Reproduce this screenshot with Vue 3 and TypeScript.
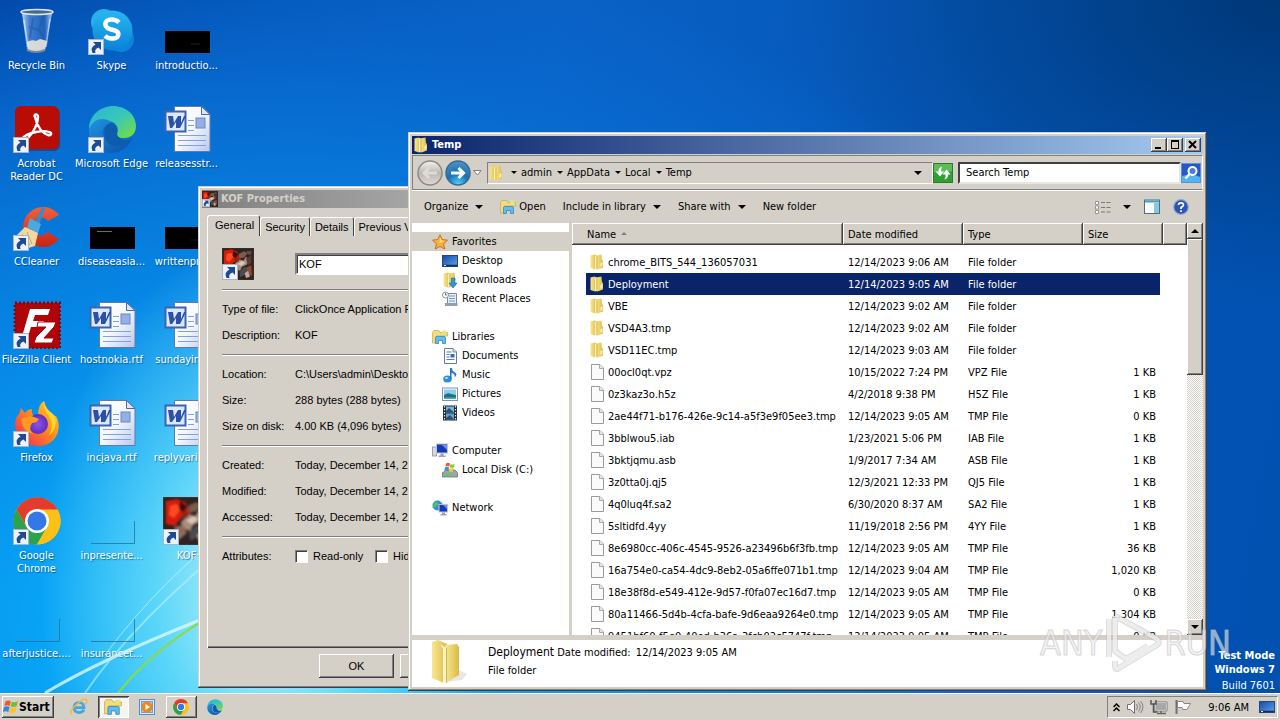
<script setup lang="ts">
interface DesktopItem {
  label: string
  icon: string
  shortcut?: boolean
}
interface FileRow {
  name: string
  date: string
  type: string
  size: string
}
interface NavEntry {
  label: string
  icon: string
  root?: boolean
}

const desktopItems: DesktopItem[] = [
  { label: 'Recycle Bin', icon: 'bin' },
  { label: 'Acrobat\nReader DC', icon: 'acrobat', shortcut: true },
  { label: 'CCleaner', icon: 'ccleaner', shortcut: true },
  { label: 'FileZilla Client', icon: 'filezilla', shortcut: true },
  { label: 'Firefox', icon: 'firefox', shortcut: true },
  { label: 'Google\nChrome', icon: 'chrome', shortcut: true },
  { label: 'afterjustice....', icon: 'blank' },
  { label: 'Skype', icon: 'skype', shortcut: true },
  { label: 'Microsoft Edge', icon: 'edge', shortcut: true },
  { label: 'diseaseasia...', icon: 'blackline' },
  { label: 'hostnokia.rtf', icon: 'word' },
  { label: 'incjava.rtf', icon: 'word' },
  { label: 'inpresente...', icon: 'blank' },
  { label: 'insurancet...', icon: 'blank' },
  { label: 'introductio...', icon: 'black' },
  { label: 'releasesstr...', icon: 'word' },
  { label: 'writtenprio...', icon: 'black' },
  { label: 'sundayincl...', icon: 'word' },
  { label: 'replyvariou...', icon: 'word' },
  { label: 'KOF', icon: 'kof', shortcut: true }
]

const navGroups: NavEntry[][] = [
  [
    { label: 'Favorites', icon: 'star', root: true },
    { label: 'Desktop', icon: 'desk' },
    { label: 'Downloads', icon: 'downloads' },
    { label: 'Recent Places', icon: 'recent' }
  ],
  [
    { label: 'Libraries', icon: 'library', root: true },
    { label: 'Documents', icon: 'document' },
    { label: 'Music', icon: 'music' },
    { label: 'Pictures', icon: 'pictures' },
    { label: 'Videos', icon: 'videos' }
  ],
  [
    { label: 'Computer', icon: 'computer', root: true },
    { label: 'Local Disk (C:)', icon: 'disk' }
  ],
  [{ label: 'Network', icon: 'network', root: true }]
]

const files: FileRow[] = [
  { name: 'chrome_BITS_544_136057031', date: '12/14/2023 9:06 AM', type: 'File folder', size: '' },
  { name: 'Deployment', date: '12/14/2023 9:05 AM', type: 'File folder', size: '' },
  { name: 'VBE', date: '12/14/2023 9:02 AM', type: 'File folder', size: '' },
  { name: 'VSD4A3.tmp', date: '12/14/2023 9:02 AM', type: 'File folder', size: '' },
  { name: 'VSD11EC.tmp', date: '12/14/2023 9:03 AM', type: 'File folder', size: '' },
  { name: '00ocl0qt.vpz', date: '10/15/2022 7:24 PM', type: 'VPZ File', size: '1 KB' },
  { name: '0z3kaz3o.h5z', date: '4/2/2018 9:38 PM', type: 'H5Z File', size: '1 KB' },
  { name: '2ae44f71-b176-426e-9c14-a5f3e9f05ee3.tmp', date: '12/14/2023 9:05 AM', type: 'TMP File', size: '0 KB' },
  { name: '3bblwou5.iab', date: '1/23/2021 5:06 PM', type: 'IAB File', size: '1 KB' },
  { name: '3bktjqmu.asb', date: '1/9/2017 7:34 AM', type: 'ASB File', size: '1 KB' },
  { name: '3z0tta0j.qj5', date: '12/3/2021 12:33 PM', type: 'QJ5 File', size: '1 KB' },
  { name: '4q0luq4f.sa2', date: '6/30/2020 8:37 AM', type: 'SA2 File', size: '1 KB' },
  { name: '5sltidfd.4yy', date: '11/19/2018 2:56 PM', type: '4YY File', size: '1 KB' },
  { name: '8e6980cc-406c-4545-9526-a23496b6f3fb.tmp', date: '12/14/2023 9:05 AM', type: 'TMP File', size: '36 KB' },
  { name: '16a754e0-ca54-4dc9-8eb2-05a6ffe071b1.tmp', date: '12/14/2023 9:04 AM', type: 'TMP File', size: '1,020 KB' },
  { name: '18e38f8d-e549-412e-9d57-f0fa07ec16d7.tmp', date: '12/14/2023 9:05 AM', type: 'TMP File', size: '0 KB' },
  { name: '80a11466-5d4b-4cfa-bafe-9d6eaa9264e0.tmp', date: '12/14/2023 9:05 AM', type: 'TMP File', size: '1,304 KB' },
  { name: '9451bf60-f5e0-40ed-b36a-3fcb02c5747f.tmp', date: '12/14/2023 9:05 AM', type: 'TMP File', size: '0 KB' }
]
const selectedName = 'Deployment'

const crumbs = ['admin', 'AppData', 'Local', 'Temp']

const propertyGroups: [string, string][][] = [
  [
    ['Type of file:', 'ClickOnce Application Reference'],
    ['Description:', 'KOF']
  ],
  [
    ['Location:', 'C:\\Users\\admin\\Desktop'],
    ['Size:', '288 bytes (288 bytes)'],
    ['Size on disk:', '4.00 KB (4,096 bytes)']
  ],
  [
    ['Created:', 'Today, December 14, 2023'],
    ['Modified:', 'Today, December 14, 2023'],
    ['Accessed:', 'Today, December 14, 2023']
  ]
]
</script>

<template>
  <div class="screen">
    <svg class="sprite" aria-hidden="true">
      <defs>
        <linearGradient id="gFolder" x1="0" x2="1"><stop offset="0" stop-color="#f8e692" /><stop offset=".55" stop-color="#ead068" /><stop offset="1" stop-color="#d8b848" /></linearGradient>
        <linearGradient id="gPage" x1="0" y1="0" x2="1" y2="1"><stop offset="0" stop-color="#fff" /><stop offset=".5" stop-color="#f4f8ff" /><stop offset="1" stop-color="#b8c8ec" /></linearGradient>
        <linearGradient id="gSkype" x1="0" y1="0" x2="0" y2="1"><stop offset="0" stop-color="#28b8f0" /><stop offset="1" stop-color="#0a82d8" /></linearGradient>
        <linearGradient id="gEdgeTop" x1="0" y1="0" x2="1" y2="1"><stop offset="0" stop-color="#2bb4d8" /><stop offset=".5" stop-color="#38c8b8" /><stop offset="1" stop-color="#7ce030" /></linearGradient>
        <linearGradient id="gEdgeLow" x1="0" y1="0" x2="1" y2="1"><stop offset="0" stop-color="#1f94e0" /><stop offset="1" stop-color="#0c4ea8" /></linearGradient>
        <linearGradient id="gFox" x1="1" y1="0" x2="0" y2="1"><stop offset="0" stop-color="#ffe226" /><stop offset=".45" stop-color="#ff8a1e" /><stop offset="1" stop-color="#f01e5a" /></linearGradient>
        <radialGradient id="gFoxIn"><stop offset="0" stop-color="#9050f0" /><stop offset="1" stop-color="#5a30b8" /></radialGradient>
        <linearGradient id="gGlass" x1="0" x2="1"><stop offset="0" stop-color="#d8e8fa" stop-opacity=".9" /><stop offset=".25" stop-color="#5a92dc" stop-opacity=".7" /><stop offset=".75" stop-color="#2f6cc4" stop-opacity=".6" /><stop offset="1" stop-color="#d0e2f6" stop-opacity=".9" /></linearGradient>
        <linearGradient id="gScreen" x1="0" y1="0" x2="1" y2="1"><stop offset="0" stop-color="#1648a8" /><stop offset="1" stop-color="#5aa4ee" /></linearGradient>
        <radialGradient id="gBlue" cx=".5" cy=".95" r=".9"><stop offset="0" stop-color="#50d0f8" /><stop offset=".5" stop-color="#1670b8" /><stop offset="1" stop-color="#4a90c8" /></radialGradient>
        <linearGradient id="gGrey" x1="0" y1="0" x2="0" y2="1"><stop offset="0" stop-color="#f4f2ee" /><stop offset=".5" stop-color="#bcb8b0" /><stop offset="1" stop-color="#dedbd4" /></linearGradient>
        <linearGradient id="gRed" x1="0" y1="0" x2="0" y2="1"><stop offset="0" stop-color="#f0603c" /><stop offset="1" stop-color="#c82414" /></linearGradient>
        <filter id="soft"><feGaussianBlur stdDeviation="1" /></filter>
      </defs>

      <symbol id="bin" viewBox="0 0 48 48">
        <path d="M9 6 14 43Q23 47 32 43L39 6Z" fill="url(#gGlass)" />
        <path d="M14 35q5-3 9-1l4-2 7 2-2 9q-9 3-17 0Z" fill="#e9e4d8" opacity=".9" />
        <path d="M20 11l-3 20M30 10l-4 13 5 8M16 20l12 4" stroke="#24549c" stroke-width="2" opacity=".5" fill="none" />
        <path d="M11 13l4 27M37 12l-4 28" stroke="#fff" stroke-width="1.5" opacity=".5" />
        <ellipse cx="24" cy="5" rx="16" ry="2.500" fill="#49688e" stroke="#dde4ea" stroke-width="1.500" />
        <path d="M14 43q9 4 18 0" stroke="#7888a0" stroke-width="2" fill="none" />
      </symbol>
      <symbol id="acrobat" viewBox="0 0 48 48">
        <rect x="3" y="3" width="44" height="43" rx="6" fill="#4e1c2c" opacity=".5" />
        <rect x="2" y="1" width="44" height="43" rx="6" fill="#b80c04" />
        <path d="M22 12c-2-3 3-4 3 0 0 7-5 16-10 21-4 3-7 0-3-2 6-4 19-6 24-4 4 1 2 4-1 3-5-1-11-8-13-18Z" fill="none" stroke="#fff" stroke-width="2.4" />
      </symbol>
      <symbol id="ccleaner" viewBox="0 0 48 48">
        <path d="M46 12A20 20 0 1 0 46 36L35 29A9 9 0 1 1 35 18Z" fill="url(#gRed)" />
        <path d="M29 4l3 1-7 20-5-2Z" fill="#3a8cc8" />
        <path d="M17 15l11 6-3 9-11-5Z" fill="#4fa8dc" />
        <path d="M12 24 25 30 22 43 12 46 1 35Z" fill="#f2d8a0" />
        <path d="M9 31l8 11M14 29l5 12" stroke="#c8a868" />
      </symbol>
      <symbol id="filezilla" viewBox="0 0 48 48">
        <rect x="2" y="2" width="45" height="45" fill="#b00408" stroke="#8d0408" stroke-width="3" stroke-dasharray="2 2" />
        <path d="M17 8H37L35 14H22L20 20H31L29 26H18L14 39H8Z" fill="#fff" />
        <path d="M25 21H43L41 26 31 37H41L39 42H21L23 36 33 26H24Z" fill="#fff" stroke="#a80408" />
      </symbol>
      <symbol id="firefox" viewBox="0 0 48 48">
        <path d="M8 9Q10 11 12 14 15 10 19 10 18 13 20 16L25 17Q25 5 31 2 32 10 39 14L41 18 43 17Q47 24 45 33 40 47 25 47 8 46 3 33 0 20 6 15Z" fill="url(#gFox)" />
        <circle cx="25" cy="25" r="10" fill="url(#gFoxIn)" />
        <path d="M8 20Q17 16 21 18L26 20Q24 24 19 24 15 30 20 35 12 33 10 27Z" fill="#ff9a20" />
        <path d="M31 2Q30 10 36 17 42 26 36 36 45 30 42 17 32 10 31 2Z" fill="#ffd72c" />
      </symbol>
      <symbol id="chrome" viewBox="0 0 48 48">
        <circle cx="24" cy="24" r="23.5" fill="#fbc116" />
        <path d="M3.600 12.200A23.500 23.500 0 0 0 24 47.500L34.200 30 24 24 13.800 30Z" fill="#2ba24c" />
        <path d="M24 12.500H44.600A23.500 23.500 0 0 1 24 47.500L34 30Z" fill="#fbc116" />
        <path d="M3.600 12.200A23.500 23.500 0 0 1 44.600 12.500H24L14 30Z" fill="#e33b2e" />
        <circle cx="24" cy="24" r="12" fill="#fff" /><circle cx="24" cy="24" r="9.500" fill="#3478e8" />
      </symbol>
      <symbol id="blank" viewBox="0 0 48 48"><path d="M3 46.500H46.500V24" fill="none" stroke="#1c6a94" stroke-opacity=".7" /></symbol>
      <symbol id="skype" viewBox="0 0 48 48">
        <circle cx="16" cy="15" r="13" fill="#27b0ec" /><circle cx="33" cy="32" r="13" fill="#0c84dc" /><circle cx="24.500" cy="23.500" r="20" fill="url(#gSkype)" />
        <path d="M31 15.500q-3-3-7.500-3c-8 0-8 8-1 9.800 6 1.500 9 2.700 7.500 6.500-1.800 4-10 3-13 0" fill="none" stroke="#fff" stroke-width="4.500" />
      </symbol>
      <symbol id="edge" viewBox="0 0 48 48">
        <path d="M1 24C1 10 13 1 25 1 38 1 48 10 48 21 48 29 43 33 36 33 30 33 28 31 29 29 32 22 27 16 19 16 10 16 3 21 1 24Z" fill="url(#gEdgeTop)" />
        <path d="M1 24C6 12 18 12 24 18 16 18 12 27 17 35 22 43 35 44 44 34 39 44 31 48 23 48 9 47 0 38 1 24Z" fill="url(#gEdgeLow)" />
        <path d="M24 18C15 19 14 32 21 39 29 44 40 41 45 33 36 38 29 33 29 28 30 24 28 20 24 18Z" fill="#0d5cae" />
      </symbol>
      <symbol id="black" viewBox="0 0 48 48"><rect x="2" y="24" width="45" height="22" fill="#000" /><path d="M28 37h9" stroke="#262626" stroke-width=".8" /></symbol>
      <symbol id="blackline" viewBox="0 0 48 48"><rect x="2" y="24" width="45" height="22" fill="#000" /><path d="M9 28.500h15" stroke="#6c7c14" /></symbol>
      <symbol id="word" viewBox="0 0 48 48">
        <path d="M11.500 1.500H39L47 9.500V46.500H11.500Z" fill="url(#gPage)" stroke="#6478ac" />
        <path d="M38.500 1.500V9.500H47Z" fill="#dbe6fa" stroke="#5068a4" />
        <path d="M25 15.500h6M25 20.500h6M25 25.500h6M15 30.500h28M15 35.500h28M15 40.500h28" stroke="#86a0dc" />
        <rect x="33" y="13" width="9" height="10" fill="#96b0e4" stroke="#6a88c8" />
        <rect x="2.500" y="6.500" width="20" height="20" fill="#dce8fc" stroke="#3c62b4" stroke-width="2" />
        <path d="M5 11h5l1 7 4-7h3v7l3-7h2l-6 12h-4v-6l-4 6H7Z" fill="#2a50a8" />
      </symbol>
      <symbol id="kof" viewBox="0 0 48 48">
        <rect width="48" height="48" fill="#30221e" />
        <g filter="url(#soft)">
          <path d="M3 4 14 2 23 6 26 16 17 22 12 29 3 27Z" fill="#d41c0c" /><path d="M7 9l7-2 3 6-6 8-5-3Z" fill="#ff4a20" />
          <path d="M17 4l7 5-3 7-5-4Z" fill="#3a1010" /><path d="M25 9l8-4 5 3-4 6-8 2Z" fill="#7a5c4c" />
          <path d="M18 25 26 17 32 19 36 13 41 18 37 25 30 28 27 34 19 31Z" fill="#a88c7c" /><path d="M23 24l7-5 5 3-6 5Z" fill="#d8c8bc" />
          <path d="M20 14l7 2-3 5-6-2Z" fill="#8c2818" /><path d="M36 16l8-5v12l-5 3Z" fill="#5a3a30" />
          <path d="M26 35l8-7 6 4-5 8-8 4Z" fill="#4a4c50" /><path d="M37 29l7-3 1 16-6-3Z" fill="#8c4a38" />
          <path d="M11 30l9-2 4 8-8 7Z" fill="#8c6a58" /><path d="M34 38l5-4 3 9-6 2Z" fill="#c0a898" /><path d="M37 4l8 1-2 6-6-2Z" fill="#5a4c44" />
        </g>
        <rect x=".5" y=".5" width="47" height="47" fill="none" stroke="#3c3434" />
      </symbol>
      <symbol id="shortcut" viewBox="0 0 16 16">
        <rect x=".5" y=".5" width="15" height="15" fill="#eef2f8" stroke="#a8b4c8" />
        <path d="M5 3h8v8l-2.500-2.500Q6 10 7.500 14H4.500Q1.500 8.500 7.500 5.500Z" fill="#1c4a94" />
      </symbol>

      <symbol id="folder" viewBox="0 0 16 16">
        <path d="M1.500 1.500 5.500 .5 8 1.500V15L6 15.500 1.500 14Z" fill="url(#gFolder)" />
        <path d="M7 1.500 12.500 .5 13 6 14 7V13.500L8.500 15.500 7 15Z" fill="url(#gFolder)" />
        <path d="M6.500 2v13" stroke="#fbf2b8" /><path d="M8 2v13" stroke="#cfae44" stroke-width=".8" /><path d="M11.500 9l2-1v4l-2 1Z" fill="#fbf0b0" />
      </symbol>
      <symbol id="bigfolder" viewBox="0 0 40 44">
        <path d="M18 42l16-2 5-6-8-4Z" fill="#888" opacity=".2" />
        <path d="M4 2 10 0 19 4V43L16 43 4 38Z" fill="url(#gFolder)" />
        <path d="M17 5 29 4 31 7V35L17 43Z" fill="url(#gFolder)" />
        <path d="M12 4 18 8V43L15 43V9Z" fill="#fdf6c8" /><path d="M18.500 8V42" stroke="#c8a840" stroke-width=".8" />
      </symbol>
      <symbol id="file" viewBox="0 0 16 16">
        <path d="M2.500 .5H11L14.500 4V15.500H2.500Z" fill="#fafafa" stroke="#9a9a9a" /><path d="M10.500 .5V4.500H14.500" fill="#e8e8e8" stroke="#aaa" />
      </symbol>
      <symbol id="star" viewBox="0 0 16 16"><path d="M8 .8 10.200 5.500 15.500 6.200 11.600 9.800 12.700 15 8 12.400 3.300 15 4.400 9.800 .5 6.200 5.800 5.500Z" fill="#fbb03a" stroke="#c07424" /><path d="M8 3l1.500 3.500 3 .5-5 2Z" fill="#ffe08a" /></symbol>
      <symbol id="desk" viewBox="0 0 16 16"><rect x=".5" y="2.500" width="15" height="11" fill="url(#gScreen)" stroke="#24487c" /><path d="M1 12.500h14" stroke="#1c2c50" stroke-width="1.500" /><path d="M2 12.500h2" stroke="#dcecff" /></symbol>
      <symbol id="downloads" viewBox="0 0 16 16"><use href="#folder" /><path d="M9.500 6h3v5H15l-4 5-4-5h2.500Z" fill="#2a98e4" stroke="#1668b0" stroke-width=".6" /></symbol>
      <symbol id="recent" viewBox="0 0 16 16"><path d="M5.500 2.500H14.500V12.500H5.500Z" fill="#e8eef4" stroke="#7a8a98" /><path d="M7 5h6M7 7.500h6M7 10h6" stroke="#6a9ccc" /><circle cx="3.500" cy="4" r="3" fill="#fff" stroke="#8494a4" /><path d="M3.500 2v2H5" stroke="#445" fill="none" stroke-width=".8" /><path d="M3 13.500h12.500" stroke="#90a0b0" stroke-width="3" /></symbol>
      <symbol id="library" viewBox="0 0 16 16"><path d="M.5 3.500V14h4V7h11V3.500H8L7 1.500H2Z" fill="#f2dc82" stroke="#cdb04c" stroke-width=".8" /><path d="M10 1.500h4.500v3H10Z" fill="#d8e88c" /><path d="M3.500 14.500V8.500Q3.500 7.500 4.500 7.500H12Q13.500 7.500 13.500 8.500V14.500H10.500V11.500H6.500V14.500Z" fill="#64bce8" stroke="#308cc0" stroke-width=".8" /></symbol>
      <symbol id="document" viewBox="0 0 16 16"><path d="M2.500 .5H11L14.500 4V15.500H2.500Z" fill="#fbfcff" stroke="#6c7c90" /><path d="M11 .5V4h3.500" fill="#cde" stroke="#6c7c90" stroke-width=".8" /><path d="M4.500 4h5M4.500 6.500h3M4.500 9h3M4.500 11.500h8" stroke="#607c9c" /><rect x="8.500" y="6" width="4" height="3.500" fill="#2a70b8" /></symbol>
      <symbol id="music" viewBox="0 0 16 16"><ellipse cx="5.500" cy="12" rx="4.300" ry="3.500" fill="#2a90dc" /><path d="M8 12V1h2q0 3 3 4.500t-.5 5q1-4-3-4.500v6Z" fill="#2478c4" /><ellipse cx="4.500" cy="11" rx="1.800" ry="1" fill="#9fdcff" /></symbol>
      <symbol id="pictures" viewBox="0 0 16 16"><rect x=".5" y="2" width="15" height="12.500" fill="#fff" stroke="#8494a4" /><rect x="2" y="3.500" width="12" height="9.500" fill="#8ccdf4" /><path d="M2 9q4-3 7-1l5 1v4H2Z" fill="#1f7480" /><path d="M2 11.500h12V13H2Z" fill="#4ab0c8" /></symbol>
      <symbol id="videos" viewBox="0 0 16 16"><rect x="1" y=".5" width="14" height="15" fill="#25282e" /><rect x="4" y="1.500" width="8" height="6" fill="#74b4e4" /><rect x="4" y="8.500" width="8" height="6" fill="#5ca4dc" /><path d="M4 6l3-3 5 4.500H4ZM4 13l4-3 4 4.500H4Z" fill="#2d4f68" /><path d="M2.500 1v14M13.500 1v14" stroke="#e8e8e8" stroke-width="1.200" stroke-dasharray="1.500 1.500" /></symbol>
      <symbol id="computer" viewBox="0 0 16 16"><rect x=".5" y="4" width="4" height="9" fill="#d4d8e0" stroke="#8890a0" stroke-width=".8" /><rect x="4.500" y="1" width="11" height="9" fill="#1838b4" stroke="#b8c4d4" /><path d="M10 2h5v5Z" fill="#5c94f0" /><path d="M8.500 10.500h3v2h2V14H6.500v-1.500h2Z" fill="#98a4b4" /></symbol>
      <symbol id="disk" viewBox="0 0 16 16"><path d="M1 10.500 4 8H13L15.500 10.500V15H.5V10.500Z" fill="#98a8a4" stroke="#5c6c68" stroke-width=".7" /><path d="M1 12.500h9" stroke="#48d060" stroke-width="1.200" /><path d="M4 1.500q2-1.500 4 0l-.7 3.200q-2-1.500-4 0Z" fill="#f05a28" /><path d="M8.500 2q2 1 4.200 0L12 5.200q-2.200 1-4.200 0Z" fill="#88c840" /><path d="M3 5.500q2-1.500 4 0L6.300 8.700q-2-1.500-4 0Z" fill="#3c8ce4" /><path d="M7.500 6q2 1 4.200 0L11 9.200q-2.200 1-4.200 0Z" fill="#fcc828" /></symbol>
      <symbol id="network" viewBox="0 0 16 16"><circle cx="5.500" cy="5.500" r="5" fill="#2c90d8" /><path d="M2 3q3-2 4 0T3 7t-2 0ZM6 6q3-2 4 1L7 10Z" fill="#58c064" /><rect x="7" y="4.500" width="8.500" height="7.500" fill="#1838b4" stroke="#b8c4d4" /><path d="M11 5h4v4Z" fill="#5c94f0" /><path d="M10 12.500h3v1.500h1.500V15.500h-6V14H10Z" fill="#98a4b4" /></symbol>
      <symbol id="flagwin" viewBox="0 0 16 16"><path d="M2.500 2.500Q5 .8 7.800 2.300L6.700 7Q4 5.500 1.300 7Z" fill="#ec5a28" /><path d="M8.700 2.800Q11.500 4 15 2L13.800 7Q10.500 8.600 7.600 7.300Z" fill="#78bc38" /><path d="M1 8Q4 6.500 6.500 8L5.300 13Q2.800 11.500-.2 13Z" fill="#3884dc" /><path d="M7.400 8.300Q10.300 9.600 13.600 8L12.400 13Q9 14.600 6.200 13.300Z" fill="#fac428" /></symbol>
      <symbol id="ie" viewBox="0 0 16 16"><path d="M12.500 10.500Q11 13 8 13 3.500 12.500 3.500 8.500 4 4 8 4T12.500 8.500H4.500" fill="none" stroke="#42a8e4" stroke-width="2.400" /><path d="M1.500 14.500Q-1 12 6 5.500T15 2Q15.500 4 13 6" fill="none" stroke="#e8bc38" stroke-width="1.200" /></symbol>
      <symbol id="media" viewBox="0 0 16 16"><rect x=".5" y=".5" width="15" height="15" fill="#dcecf8" stroke="#5a8cc8" /><rect x="2.500" y="2.500" width="11" height="11" fill="#a8ccec" stroke="#6ca0d4" /><circle cx="8" cy="8" r="5.500" fill="#f08420" /><path d="M6.500 5l4.500 3-4.500 3Z" fill="#fff" /></symbol>
      <symbol id="help" viewBox="0 0 16 16"><circle cx="8" cy="8" r="7.300" fill="#2c54b4" stroke="#8ca4d8" stroke-width="1.200" /><path d="M5.500 6Q5.500 3.800 8 3.800T10.400 6Q10.400 7.200 8 8.500V10M8 11.200V13" fill="none" stroke="#fff" stroke-width="1.800" /></symbol>
      <symbol id="preview" viewBox="0 0 16 16"><rect x=".5" y="1" width="15" height="13.500" fill="#fff" stroke="#48708c" /><path d="M1 2.500h14" stroke="#48a0c0" stroke-width="2" /><rect x="10" y="4" width="5" height="10" fill="#88c8dc" /></symbol>
      <symbol id="views" viewBox="0 0 16 16"><path d="M.5 2.500h3v3h-3ZM.5 7h3v3h-3ZM.5 11.500h3v3h-3Z" fill="#fff" stroke="#7c8088" stroke-width=".8" /><path d="M6 3.500h4M11.500 3.500h4M6 8.500h4M11.500 8.500h4M6 13h4M11.500 13h4" stroke="#787878" /></symbol>
      <symbol id="refresh" viewBox="0 0 20 20"><rect x=".5" y=".5" width="19" height="19" fill="#2ea032" stroke="#2a7c2e" /><path d="M1 1H19V8Q10 12 1 9Z" fill="#7cd070" opacity=".6" /><path d="M9 3.500Q5 5 5.500 8.500H2.500L7 13.500 11 8.500H8Q8 6 9 3.500ZM11.500 16.500q4-1.500 3.500-5h2.500L13.500 6.500 9.500 11.500h3q.5 2.500-1 5Z" fill="#fff" /></symbol>
      <symbol id="search" viewBox="0 0 20 20"><rect x=".5" y=".5" width="19" height="19" fill="#2458c8" stroke="#6090d8" /><path d="M1 13Q12 10 19 14V19H1Z" fill="#50b4f0" /><circle cx="11.500" cy="8" r="4" fill="#4a7cdc" stroke="#fff" stroke-width="2" /><path d="M8.500 11 4.500 15.500" stroke="#fff" stroke-width="2.500" /></symbol>
      <symbol id="sound" viewBox="0 0 18 16"><path d="M1.500 5.500H4.500L8.500 1.500V14.500L4.500 10.500H1.500Z" fill="#fff" stroke="#707070" /><path d="M10.500 5q2 3 0 6M12.500 3.500q3.500 4.500 0 9M14.500 2q5 6 0 12" fill="none" stroke="#808080" /></symbol>
      <symbol id="lan" viewBox="0 0 18 16"><rect x="5.500" y="3.500" width="11" height="8" fill="#a8a8a8" stroke="#fff" /><path d="M5 3h12v9H5Z" fill="none" stroke="#555" stroke-width=".7" /><path d="M7 14.500h9M11 12v2" stroke="#666" stroke-width="1.500" /><path d="M1 1v4h5V1M3.500 5v8h4" fill="none" stroke="#555" stroke-width="1.500" /></symbol>
      <symbol id="flag" viewBox="0 0 18 16"><path d="M2.500 1V15" stroke="#707070" stroke-width="2" /><path d="M3.500 2.500H9L10 4.500H16.500L13 10.500H8.500L8 8.500H3.500Z" fill="#fff" stroke="#888" /></symbol>
    </svg>

    <main class="desktop">
      <svg class="rays" viewBox="0 0 420 340" fill="none" aria-hidden="true">
        <path d="M45 338Q100 305 200 265" stroke="#d8f8ff" stroke-width="3" opacity=".8" />
        <path d="M85 338Q135 265 240 180" stroke="#b8f0ff" stroke-width="2" opacity=".6" />
        <path d="M105 300Q160 225 240 165" stroke="#d8faff" opacity=".6" />
        <path d="M118 338Q160 285 240 245" stroke="#88dc48" stroke-width="2" />
      </svg>

      <ul class="icons">
        <li v-for="item in desktopItems" :key="item.label" class="icon-item">
          <span class="icon-art">
            <svg width="48" height="48" aria-hidden="true"><use :href="'#' + item.icon" /></svg>
            <svg v-if="item.shortcut" class="shortcut" width="16" height="16" aria-hidden="true"><use href="#shortcut" /></svg>
          </span>
          <span class="icon-label">{{ item.label }}</span>
        </li>
      </ul>

      <div class="build">
        <b>Test Mode</b>
        <b>Windows 7</b>
        <span>Build 7601</span>
      </div>

      <section class="window props" aria-label="KOF Properties">
        <header class="title inactive">
          <svg width="16" height="16" aria-hidden="true"><use href="#kof" /></svg>
          <svg class="mini-arrow" width="8" height="8" aria-hidden="true"><use href="#shortcut" /></svg>
          <h2>KOF Properties</h2>
        </header>
        <div class="tabs">
          <button class="tab active" type="button">General</button>
          <button class="tab" type="button">Security</button>
          <button class="tab" type="button">Details</button>
          <button class="tab" type="button">Previous Versions</button>
        </div>
        <div class="panel">
          <div class="name-row">
            <span class="prop-icon">
              <svg width="32" height="32" aria-hidden="true"><use href="#kof" /></svg>
              <svg class="shortcut" width="16" height="16" aria-hidden="true"><use href="#shortcut" /></svg>
            </span>
            <input class="name-input" type="text" value="KOF" aria-label="File name" />
          </div>
          <template v-for="(group, g) in propertyGroups" :key="g">
            <hr class="rule" />
            <dl v-for="row in group" :key="row[0]" class="prop-row">
              <dt>{{ row[0] }}</dt>
              <dd>{{ row[1] }}</dd>
            </dl>
          </template>
          <hr class="rule" />
          <div class="prop-row">
            <span class="attr-title">Attributes:</span>
            <label class="check"><input type="checkbox" />Read-only</label>
            <label class="check"><input type="checkbox" />Hidden</label>
          </div>
        </div>
        <footer class="dialog-buttons">
          <button class="push" type="button">OK</button>
          <button class="push" type="button">Cancel</button>
          <button class="push" type="button">Apply</button>
        </footer>
      </section>

      <section class="window explorer" aria-label="Temp">
        <header class="title">
          <svg width="16" height="16" aria-hidden="true"><use href="#folder" /></svg>
          <h1>Temp</h1>
          <button class="caption" type="button" aria-label="Minimize"><svg width="10" height="10"><path d="M1 8h6" stroke="#000" stroke-width="2" /></svg></button>
          <button class="caption" type="button" aria-label="Maximize"><svg width="10" height="10"><path d="M1 0h8v9H1Z M2 2v6h6V2Z" fill="#000" fill-rule="evenodd" /></svg></button>
          <button class="caption close" type="button" aria-label="Close"><svg width="10" height="10"><path d="M1 1l7 7M8 1 1 8" stroke="#000" stroke-width="2" /></svg></button>
        </header>

        <nav class="address-row">
          <button class="round" type="button" aria-label="Back"><svg width="28" height="28" viewBox="0 0 28 28"><circle cx="14" cy="14" r="12" fill="url(#gGrey)" stroke="#8c8a86" stroke-width="1.500" /><path d="M21 14H8M13 9l-5 5 5 5" fill="none" stroke="#dedbd5" stroke-width="3" /></svg></button>
          <button class="round" type="button" aria-label="Forward"><svg width="28" height="28" viewBox="0 0 28 28"><circle cx="14" cy="14" r="12" fill="url(#gBlue)" stroke="#3c6890" stroke-width="1.500" /><path d="M7 14H19M14.500 9l5 5-5 5" fill="none" stroke="#fff" stroke-width="3" /></svg></button>
          <button class="recent-btn" type="button" aria-label="Recent pages"><svg width="9" height="6"><path d="M.5 .5H8L4.500 5Z" fill="#fff" stroke="#808080" /></svg></button>
          <div class="address">
            <svg width="16" height="16" aria-hidden="true"><use href="#folder" /></svg>
            <span class="crumbs">
              <button v-for="c in crumbs" :key="c" class="crumb" type="button"><i class="tri small"></i>{{ c }}</button>
            </span>
            <button class="drop" type="button" aria-label="Previous locations"><i class="tri"></i></button>
          </div>
          <button class="square" type="button" aria-label="Refresh"><svg width="20" height="20"><use href="#refresh" /></svg></button>
          <input class="search" type="search" placeholder="Search Temp" aria-label="Search Temp" />
          <button class="square" type="button" aria-label="Search"><svg width="20" height="20"><use href="#search" /></svg></button>
        </nav>

        <div class="toolbar">
          <button class="tool" type="button">Organize <i class="tri"></i></button>
          <button class="tool open" type="button"><svg width="16" height="16" aria-hidden="true"><use href="#library" /></svg>Open</button>
          <button class="tool" type="button">Include in library <i class="tri"></i></button>
          <button class="tool" type="button">Share with <i class="tri"></i></button>
          <button class="tool" type="button">New folder</button>
          <span class="spring"></span>
          <button class="tool view" type="button" aria-label="Change your view"><svg width="16" height="16"><use href="#views" /></svg><i class="tri"></i></button>
          <button class="tool view" type="button" aria-label="Preview pane"><svg width="16" height="16"><use href="#preview" /></svg></button>
          <button class="tool view" type="button" aria-label="Help"><svg width="16" height="16"><use href="#help" /></svg></button>
        </div>

        <div class="body">
          <aside class="tree">
            <ul v-for="(group, g) in navGroups" :key="g">
              <li v-for="entry in group" :key="entry.label">
                <a href="#" class="node" :class="{ root: entry.root, current: entry.label === 'Favorites' }">
                  <svg width="16" height="16" aria-hidden="true"><use :href="'#' + entry.icon" /></svg>{{ entry.label }}
                </a>
              </li>
            </ul>
          </aside>
          <div class="list">
            <table>
              <colgroup><col /><col class="c-date" /><col class="c-date" /><col class="c-size" /><col class="c-rest" /></colgroup>
              <thead>
                <tr>
                  <th class="first">Name <i class="sort"></i></th>
                  <th>Date modified</th>
                  <th>Type</th>
                  <th>Size</th>
                  <th></th>
                </tr>
              </thead>
              <tbody>
                <tr class="pad"><td colspan="5"></td></tr>
                <tr v-for="f in files" :key="f.name" :class="{ selected: f.name === selectedName }">
                  <td class="name"><span><svg width="16" height="16" aria-hidden="true"><use :href="f.type === 'File folder' ? '#folder' : '#file'" /></svg>{{ f.name }}</span></td>
                  <td>{{ f.date }}</td>
                  <td>{{ f.type }}</td>
                  <td class="size">{{ f.size }}</td>
                  <td class="rest"></td>
                </tr>
              </tbody>
            </table>
          </div>
          <div class="scrollbar">
            <button class="sb-btn" type="button" aria-label="Scroll up"><i class="tri up"></i></button>
            <div class="thumb"></div>
            <button class="sb-btn end" type="button" aria-label="Scroll down"><i class="tri"></i></button>
          </div>
        </div>

        <footer class="details">
          <svg width="40" height="44" aria-hidden="true"><use href="#bigfolder" /></svg>
          <div>
            <p><span class="big">Deployment</span> <span>Date modified:</span> <span class="when">12/14/2023 9:05 AM</span></p>
            <p>File folder</p>
          </div>
        </footer>
      </section>

      <div class="watermark">
        <span>ANY</span>
        <svg width="62" height="60" viewBox="0 0 62 60" aria-hidden="true">
          <path d="M7 6V44M13 3V38L24 46 46 33M13 3 55 26Q59 29 55 32L17 55Q13 58 13 52V48" fill="none" stroke="#bcbcbc" stroke-opacity=".5" stroke-width="6" stroke-linejoin="round" />
          <path d="M7 6V44M13 3V38L24 46 46 33M13 3 55 26Q59 29 55 32L17 55Q13 58 13 52V48" fill="none" stroke="#f4f4f4" stroke-opacity=".7" stroke-width="4" stroke-linejoin="round" />
        </svg>
        <span>RUN</span>
      </div>
    </main>

    <footer class="taskbar">
      <button class="start" type="button"><svg width="16" height="16" aria-hidden="true"><use href="#flagwin" /></svg>Start</button>
      <div class="quick">
        <button class="task" type="button" aria-label="Internet Explorer"><svg width="18" height="18"><use href="#ie" /></svg></button>
        <button class="task pressed" type="button" aria-label="Windows Explorer"><svg width="18" height="18"><use href="#library" /></svg></button>
        <button class="task" type="button" aria-label="Media Player"><svg width="16" height="16"><use href="#media" /></svg></button>
        <button class="task raised" type="button" aria-label="Google Chrome"><svg width="16" height="16"><use href="#chrome" /></svg></button>
        <button class="task" type="button" aria-label="Microsoft Edge"><svg width="16" height="16"><use href="#edge" /></svg></button>
      </div>
      <div class="tray">
        <svg width="7" height="9" aria-hidden="true"><path d="M.5 4 3.500 1 6.500 4M.5 8 3.500 5 6.500 8" fill="none" stroke="#000" stroke-width="1.500" /></svg>
        <svg width="18" height="16" aria-hidden="true"><use href="#sound" /></svg>
        <svg width="18" height="16" aria-hidden="true"><use href="#lan" /></svg>
        <svg width="18" height="16" aria-hidden="true"><use href="#flag" /></svg>
        <time>9:06 AM</time>
        <svg width="16" height="16" aria-hidden="true"><use href="#desk" /></svg>
      </div>
    </footer>
  </div>
</template>

<style>
body {
  overflow: hidden;
}
</style>

<style scoped>
.screen {
  --face: #d4d0c8;
  --dark: #808080;
  --edge: #404040;
  display: flex;
  flex-direction: column;
  height: 100vh;
  font: 11px/13px Tahoma, 'DejaVu Sans Condensed', 'Noto Sans', sans-serif;
  color: #000;
}
.sprite {
  position: absolute;
  width: 0;
  height: 0;
}
svg {
  display: block;
  flex: none;
}
button {
  font: inherit;
  color: inherit;
  background: none;
  border: 0;
  padding: 0;
  display: flex;
  align-items: center;
}
input {
  font: inherit;
  color: #000;
}
ul, dl, dd, p, h1, h2 {
  margin: 0;
  padding: 0;
  list-style: none;
}
a {
  color: inherit;
  text-decoration: none;
}

.desktop {
  position: relative;
  flex: 1;
  min-height: 0;
  overflow: hidden;
  background:
    radial-gradient(ellipse 230px 340px at 270px 580px, rgba(215, 250, 250, .95), rgba(120, 228, 250, .7) 50%, transparent),
    radial-gradient(ellipse 900px 700px at 280px 640px, #28c8f8, #08a4f6 26%, #0688e6 50%, rgba(8, 106, 208, .9) 80%, transparent),
    radial-gradient(ellipse 500px 300px at 100% 0, #003878, transparent),
    linear-gradient(100deg, #0044a4, #0a60c4 40%, #0050b0);
}
.rays {
  position: absolute;
  left: 0;
  bottom: -2px;
  width: 420px;
  height: 340px;
}
.icons {
  display: grid;
  grid-auto-flow: column;
  grid-template-rows: repeat(7, 98px);
  grid-auto-columns: 73px;
  column-gap: 2px;
  width: max-content;
  padding-top: 7px;
}
.icon-item {
  display: flex;
  flex-direction: column;
  align-items: center;
  color: #fff;
  text-align: center;
  text-shadow: 1px 1px 1px rgba(0, 30, 80, .5);
}
.icon-art {
  position: relative;
  margin-bottom: 4px;
}
.shortcut {
  position: absolute;
  left: 0;
  bottom: 0;
}
.icon-label {
  white-space: pre;
}
.build {
  position: absolute;
  right: 5px;
  bottom: -2px;
  display: flex;
  flex-direction: column;
  text-align: right;
  color: #fff;
  line-height: 14px;
}
.build span {
  line-height: 18px;
}

.window {
  position: absolute;
  display: flex;
  flex-direction: column;
  padding: 4px;
  background: var(--face);
  box-shadow: inset -1px -1px var(--edge), inset 1px 1px var(--face), inset -2px -2px var(--dark), inset 2px 2px #fff;
}
.title {
  position: relative;
  display: flex;
  align-items: center;
  height: 18px;
  flex: none;
  padding: 0 2px 0 1px;
  color: #fff;
  background: linear-gradient(90deg, #0a246a, #a6caf0);
}
.title.inactive {
  padding: 0;
  color: #d4d0c8;
  background: linear-gradient(90deg, #808080, #c0c0c0);
}
.title h1, .title h2 {
  flex: 1;
  font-size: 11px;
  line-height: 18px;
  padding-left: 3px;
}
.mini-arrow {
  position: absolute;
  left: 0;
  bottom: 1px;
}
.caption {
  width: 16px;
  height: 14px;
  justify-content: center;
  background: var(--face);
  box-shadow: inset -1px -1px var(--edge), inset 1px 1px #fff, inset -2px -2px var(--dark);
}
.caption.close {
  margin-left: 2px;
}

.props {
  left: 198px;
  top: 186px;
  width: 367px;
  box-sizing: border-box;
  font-family: 'MS Sans Serif', 'Liberation Sans', Arial, sans-serif;
}
.props .title {
  font-family: Tahoma, 'DejaVu Sans Condensed', sans-serif;
}
.tabs {
  display: flex;
  align-items: flex-end;
  margin: 7px 5px 0;
}
.tab {
  height: 19px;
  padding: 0 4px;
  border-top: 1px solid #fff;
  border-left: 1px solid #fff;
  border-right: 1px solid var(--edge);
  border-radius: 3px 3px 0 0;
  white-space: nowrap;
}
.tab.active {
  height: 21px;
  padding: 0 5px 2px 7px;
}
.panel {
  height: 400px;
  margin: 0 5px;
  padding: 12px 14px 0;
  border-left: 1px solid #fff;
  box-shadow: inset -1px -1px var(--edge), inset -2px -2px var(--dark);
}
.name-row {
  display: flex;
  align-items: center;
  padding-bottom: 3px;
}
.prop-icon {
  position: relative;
  width: 73px;
}
.name-input {
  flex: 1;
  min-width: 0;
  height: 22px;
  box-sizing: border-box;
  padding: 0 2px;
  border: 2px solid;
  border-color: var(--dark) #fff #fff var(--dark);
  box-shadow: inset 1px 1px var(--edge);
}
.rule {
  height: 0;
  margin: 6px 0 5px;
  border: 0;
  border-top: 1px solid var(--dark);
  border-bottom: 1px solid #fff;
}
.prop-row {
  display: flex;
  align-items: center;
  height: 26px;
}
.prop-row dt, .attr-title {
  width: 73px;
  flex: none;
}
.prop-row dd {
  white-space: nowrap;
}
.check {
  display: flex;
  align-items: center;
  gap: 5px;
  width: 80px;
}
.check input {
  appearance: none;
  width: 13px;
  height: 13px;
  margin: 0;
  background: #fff;
  border: 1px solid;
  border-color: var(--dark) #fff #fff var(--dark);
  box-shadow: inset 1px 1px var(--edge);
}
.dialog-buttons {
  display: flex;
  gap: 6px;
  justify-content: flex-end;
  padding: 6px 5px;
}
.push {
  width: 75px;
  height: 24px;
  justify-content: center;
  box-shadow: inset -1px -1px var(--edge), inset 1px 1px #fff, inset -2px -2px var(--dark);
}

.explorer {
  left: 408px;
  right: 73px;
  top: 132px;
  bottom: 2px;
}
.address-row {
  display: flex;
  align-items: center;
  height: 33px;
  margin-top: 1px;
  padding: 0 1px 0 3px;
  border: 1px solid var(--dark);
  border-right-color: #fff;
  box-shadow: 0 1px #fff;
}
.recent-btn {
  padding: 0 5px 0 1px;
}
.address {
  display: flex;
  flex: 1;
  align-items: center;
  height: 20px;
  border: 1px solid;
  border-color: var(--dark) #fff #fff var(--dark);
}
.crumbs {
  display: flex;
  flex: 1;
  padding-left: 4px;
}
.crumb {
  gap: 4px;
  margin-left: 3px;
  padding-right: 2px;
}
.tri {
  width: 0;
  height: 0;
  border: 4px solid transparent;
  border-top-color: #000;
  border-bottom-width: 0;
}
.tri.small {
  border-width: 3px 3px 0;
}
.tri.up {
  border-width: 0 4px 4px;
  border-bottom-color: #000;
}
.drop {
  padding-right: 10px;
}
.square {
  flex: none;
}
.search {
  appearance: none;
  width: 223px;
  height: 22px;
  box-sizing: border-box;
  margin-left: 5px;
  padding: 0 6px;
  background: #fff;
  border: 2px solid;
  border-color: var(--edge) #e8e6e2 #e8e6e2 var(--edge);
  border-radius: 0;
}
.search::placeholder {
  color: #000;
  opacity: 1;
}
.toolbar {
  display: flex;
  align-items: center;
  height: 33px;
  flex: none;
  padding: 0 14px 0 12px;
}
.tool {
  gap: 7px;
  margin-right: 17px;
}
.tool:last-child {
  margin-right: 0;
}
.tool.open {
  gap: 3px;
}
.tool.view {
  gap: 12px;
  margin-right: 13px;
}
.tool.view:last-child {
  margin-right: 0;
}
.spring {
  flex: 1;
}

.body {
  display: flex;
  flex: 1;
  min-height: 0;
  background: #fff;
}
.tree {
  width: 157px;
  flex: none;
  padding-top: 9px;
  border-right: 3px solid var(--face);
}
.tree ul {
  margin-bottom: 19px;
}
.node {
  display: flex;
  align-items: center;
  gap: 4px;
  height: 19px;
  padding-left: 30px;
}
.node.root {
  padding-left: 20px;
}
.node.current {
  background: var(--face);
}
.list {
  flex: 1;
  min-width: 0;
  overflow: hidden;
}
table {
  width: 100%;
  table-layout: fixed;
  border-collapse: separate;
  border-spacing: 0;
}
.c-date {
  width: 120px;
}
.c-size {
  width: 80px;
}
.c-rest {
  width: 24px;
}
th {
  height: 22px;
  box-sizing: border-box;
  padding: 0 5px;
  text-align: left;
  font-weight: normal;
  background: var(--face);
  box-shadow: inset -1px -1px var(--edge), inset 1px 1px #fff, inset -2px -2px var(--dark);
}
th.first {
  padding-left: 15px;
}
.sort {
  display: inline-block;
  margin: 0 0 3px 2px;
  border: 3px solid transparent;
  border-top: 0;
  border-bottom-color: var(--dark);
}
td {
  height: 22px;
  box-sizing: border-box;
  padding: 0 5px;
  white-space: nowrap;
}
.pad td {
  height: 6px;
}
td.name {
  border-left: 14px solid #fff;
  padding: 0 0 0 3px;
}
td.name span {
  display: flex;
  align-items: center;
  gap: 3px;
}
td.size {
  text-align: right;
  border-right: 3px solid #fff;
  padding-right: 4px;
}
.selected td {
  background: #0a246a;
  color: #fff;
}
.selected td.rest {
  background: #fff;
}
.scrollbar {
  display: flex;
  flex-direction: column;
  width: 16px;
  flex: none;
  background: repeating-conic-gradient(#fff 0 25%, var(--face) 0 50%) 0 0 / 2px 2px;
}
.sb-btn, .thumb {
  background: var(--face);
  box-shadow: inset -1px -1px var(--edge), inset 1px 1px #fff, inset -2px -2px var(--dark);
}
.sb-btn {
  height: 16px;
  flex: none;
  justify-content: center;
}
.sb-btn.end {
  margin-top: auto;
}
.thumb {
  flex: 0 0 33%;
}
.details {
  display: flex;
  flex: none;
  gap: 20px;
  height: 47px;
  padding-left: 16px;
  border-top: 5px solid var(--face);
  background: #fff;
  line-height: 18px;
}
.details div {
  padding-top: 3px;
}
.big {
  font-size: 12px;
}
.when {
  margin-left: 2px;
}

.watermark {
  position: absolute;
  right: 49px;
  bottom: 20px;
  display: flex;
  align-items: center;
  font: 34px/60px 'DejaVu Sans Condensed', sans-serif;
  color: rgba(238, 238, 238, .6);
  -webkit-text-stroke: 1px rgba(190, 190, 190, .6);
  pointer-events: none;
}

.taskbar {
  display: flex;
  align-items: center;
  height: 26px;
  flex: none;
  padding: 0 2px;
  background: var(--face);
  border-top: 1px solid #fff;
}
.start {
  height: 22px;
  padding: 0 4px 0 1px;
  font-size: 12px;
  font-weight: bold;
  box-shadow: inset -1px -1px var(--edge), inset 1px 1px #fff, inset -2px -2px var(--dark);
}
.quick {
  display: flex;
  flex: 1;
  gap: 3px;
  margin-left: 10px;
}
.task {
  width: 31px;
  height: 22px;
  justify-content: center;
}
.task.raised {
  box-shadow: inset -1px -1px var(--edge), inset 1px 1px #fff, inset -2px -2px var(--dark);
}
.task.pressed {
  background: #f6f5f2;
  box-shadow: inset 1px 1px var(--edge), inset -1px -1px #fff, inset 2px 2px var(--dark);
}
.tray {
  display: flex;
  align-items: center;
  gap: 6px;
  height: 20px;
  padding: 0 2px 0 5px;
  border: 1px solid;
  border-color: var(--dark) #fff #fff var(--dark);
}
.tray time {
  padding: 0 4px 0 10px;
}
</style>
